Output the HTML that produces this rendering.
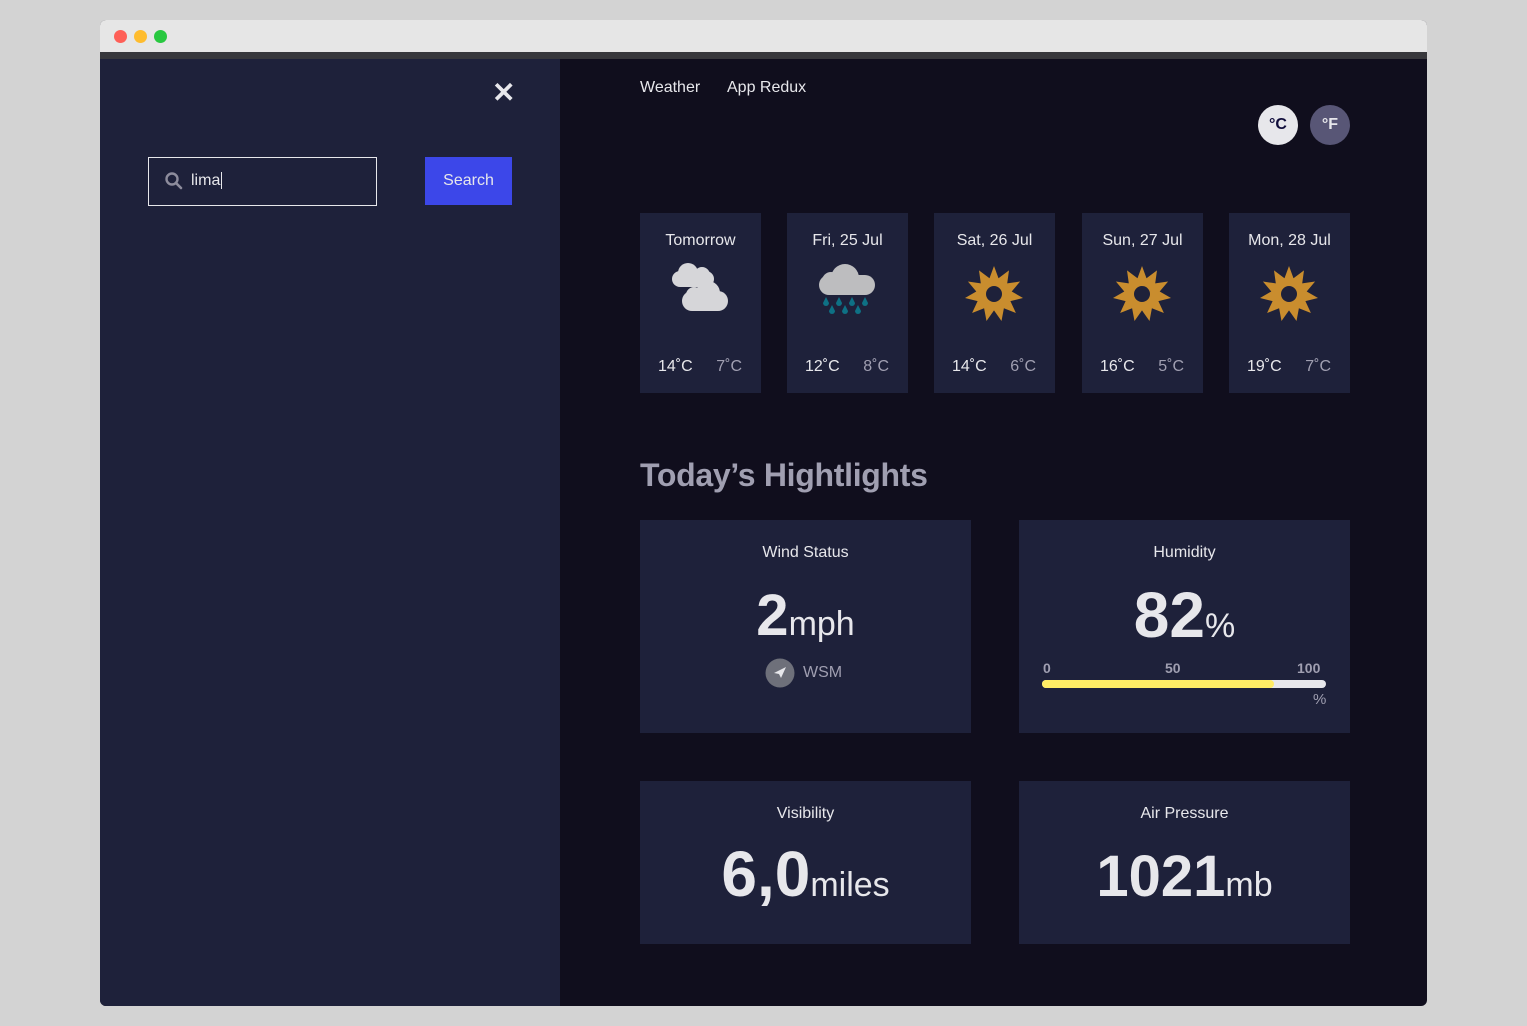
<!DOCTYPE html>
<html><head><meta charset="utf-8"><style>
*{margin:0;padding:0;box-sizing:border-box}
body{width:1527px;height:1026px;background:#d3d3d3;font-family:"Liberation Sans",sans-serif;position:relative;overflow:hidden}
.a{position:absolute}
.win{left:100px;top:20px;width:1327px;height:986px;border-radius:6px;overflow:hidden;background:#100e1d}
.bar{left:0;top:0;width:1327px;height:32px;background:#e6e6e6}
.strip{left:0;top:32px;width:1327px;height:7px;background:#38383c}
.dot{width:13px;height:13px;border-radius:50%;top:10px}
.side{left:0;top:39px;width:460px;height:947px;background:#1e213a}
.t{color:#e7e7eb}
.card{background:#1e213a;width:121px;height:180px;top:213px}
.card .d{position:absolute;top:19px;width:100%;text-align:center;color:#e7e7eb;font-size:16px}
.card .hi{position:absolute;left:18px;top:145px;color:#e7e7eb;font-size:16px}
.card .lo{position:absolute;right:19px;top:145px;color:#a09fb1;font-size:16px}
.card svg{position:absolute;left:28px;top:50px}
.hl{background:#1e213a;width:331px}
.hl .ti{position:absolute;top:24px;width:100%;text-align:center;color:#e7e7eb;font-size:16px}
.big{position:absolute;width:100%;text-align:center;color:#e7e7eb;font-weight:bold}
.big span{font-weight:normal;font-size:34px}
</style></head><body>
<div class="a win">
 <div class="a bar"></div>
 <div class="a dot" style="left:14px;background:#fe5f57"></div>
 <div class="a dot" style="left:34px;background:#febc2e"></div>
 <div class="a dot" style="left:54px;background:#28c840"></div>
 <div class="a strip"></div>
 <div class="a side"></div>
 <div class="a t" style="left:392px;top:56px;font-size:28px;font-weight:bold">✕</div>
 <div class="a" style="left:48px;top:137px;width:229px;height:49px;border:1px solid #e7e7eb"></div>
 <svg class="a" style="left:64px;top:151px" width="20" height="20" viewBox="0 0 20 20"><circle cx="8" cy="8" r="5.5" stroke="#8d8c9c" stroke-width="2.4" fill="none"/><path d="M12 12l5 5" stroke="#8d8c9c" stroke-width="2.6" stroke-linecap="round"/></svg>
 <div class="a t" style="left:91px;top:152px;font-size:16px">lima<span style="border-left:1px solid #e7e7eb;margin-left:1px"></span></div>
 <div class="a" style="left:325px;top:137px;width:87px;height:48px;background:#3c47e9;color:#e7e7eb;font-size:16px;text-align:center;line-height:48px">Search</div>

 <div class="a t" style="left:540px;top:59px;font-size:16px">Weather</div>
 <div class="a t" style="left:627px;top:59px;font-size:16px">App Redux</div>
 <div class="a" style="left:1158px;top:85px;width:40px;height:40px;border-radius:50%;background:#e7e7eb;color:#110e3c;font-weight:bold;font-size:16px;text-align:center;line-height:40px">°C</div>
 <div class="a" style="left:1210px;top:85px;width:40px;height:40px;border-radius:50%;background:#585676;color:#e7e7eb;font-weight:bold;font-size:16px;text-align:center;line-height:40px">°F</div>
</div>

<div class="a card" style="left:640px"><div class="d">Tomorrow</div>
<svg width="64" height="60" viewBox="0 0 64 60"><g fill="#d6d6d9"><rect x="4" y="8" width="42" height="16" rx="8"/><circle cx="20" cy="10" r="10"/><circle cx="34" cy="12" r="8"/></g><g fill="#1e213a"><circle cx="40" cy="34" r="14"/></g><g fill="#d6d6d9"><rect x="14" y="28" width="46" height="20" rx="10"/><circle cx="40" cy="30" r="12"/><circle cx="26" cy="32" r="8"/></g></svg>
<div class="hi">14˚C</div><div class="lo">7˚C</div></div>

<div class="a card" style="left:787px"><div class="d">Fri, 25 Jul</div>
<svg width="64" height="64" viewBox="0 0 64 64"><g fill="#bdbdbf"><rect x="4" y="12" width="56" height="20" rx="10"/><circle cx="30" cy="15" r="14"/><circle cx="16" cy="18" r="9"/></g><g fill="#0e7185"><path d="M11 34l3 6a3 3 0 1 1-6 0z"/><path d="M24 34l3 6a3 3 0 1 1-6 0z"/><path d="M37 34l3 6a3 3 0 1 1-6 0z"/><path d="M50 34l3 6a3 3 0 1 1-6 0z"/><path d="M17 42l3 6a3 3 0 1 1-6 0z"/><path d="M30 42l3 6a3 3 0 1 1-6 0z"/><path d="M43 42l3 6a3 3 0 1 1-6 0z"/></g></svg>
<div class="hi">12˚C</div><div class="lo">8˚C</div></div>

<div class="a card" style="left:934px"><div class="d">Sat, 26 Jul</div>
<svg width="64" height="64" viewBox="0 0 64 64"><polygon fill="#c98d2e" points="32,3 36.5,15.2 47,7.4 45.2,20.4 58.1,18.5 49.7,28.5 61,35 48.4,38.1 53.9,50 41.9,45.2 39.5,58 32,47.4 24.5,58 22.1,45.2 10.1,50 15.6,38.1 3,35 14.3,28.5 5.9,18.5 18.8,20.4 17,7.4 27.5,15.2"/><circle cx="32" cy="31" r="8" fill="#1e213a"/></svg>
<div class="hi">14˚C</div><div class="lo">6˚C</div></div>

<div class="a card" style="left:1082px"><div class="d">Sun, 27 Jul</div>
<svg width="64" height="64" viewBox="0 0 64 64"><polygon fill="#c98d2e" points="32,3 36.5,15.2 47,7.4 45.2,20.4 58.1,18.5 49.7,28.5 61,35 48.4,38.1 53.9,50 41.9,45.2 39.5,58 32,47.4 24.5,58 22.1,45.2 10.1,50 15.6,38.1 3,35 14.3,28.5 5.9,18.5 18.8,20.4 17,7.4 27.5,15.2"/><circle cx="32" cy="31" r="8" fill="#1e213a"/></svg>
<div class="hi">16˚C</div><div class="lo">5˚C</div></div>

<div class="a card" style="left:1229px"><div class="d">Mon, 28 Jul</div>
<svg width="64" height="64" viewBox="0 0 64 64"><polygon fill="#c98d2e" points="32,3 36.5,15.2 47,7.4 45.2,20.4 58.1,18.5 49.7,28.5 61,35 48.4,38.1 53.9,50 41.9,45.2 39.5,58 32,47.4 24.5,58 22.1,45.2 10.1,50 15.6,38.1 3,35 14.3,28.5 5.9,18.5 18.8,20.4 17,7.4 27.5,15.2"/><circle cx="32" cy="31" r="8" fill="#1e213a"/></svg>
<div class="hi">19˚C</div><div class="lo">7˚C</div></div>

<div class="a" style="left:640px;top:457px;font-size:32px;font-weight:bold;color:#a09fb1;letter-spacing:-0.3px">Today’s Hightlights</div>

<div class="a hl" style="left:640px;top:520px;height:213px"><div class="ti">Wind Status</div>
<div class="big" style="top:62px;font-size:58px">2<span>mph</span></div>
<svg class="a" style="left:125px;top:138px" width="30" height="30" viewBox="0 0 30 30"><circle cx="15" cy="15" r="14.5" fill="#6e707a"/><path d="M21 9l-5 11-2-4-5-1z" fill="#e7e7eb"/></svg>
<div class="a" style="left:163px;top:144px;color:#a09fb1;font-size:16px">WSM</div></div>

<div class="a hl" style="left:1019px;top:520px;height:213px"><div class="ti">Humidity</div>
<div class="big" style="top:58px;font-size:64px">82<span style="font-size:34px">%</span></div>
<div class="a" style="left:24px;top:140px;color:#a09fb1;font-size:14px;font-weight:bold">0</div>
<div class="a" style="left:146px;top:140px;color:#a09fb1;font-size:14px;font-weight:bold">50</div>
<div class="a" style="left:278px;top:140px;color:#a09fb1;font-size:14px;font-weight:bold">100</div>
<div class="a" style="left:23px;top:160px;width:284px;height:8px;border-radius:4px;background:#e7e7eb"><div style="width:232px;height:8px;border-radius:4px;background:#ffec65"></div></div>
<div class="a" style="left:294px;top:171px;color:#a09fb1;font-size:15px">%</div></div>

<div class="a hl" style="left:640px;top:781px;height:163px"><div class="ti">Visibility</div>
<div class="big" style="top:56px;font-size:64px">6,0<span>miles</span></div></div>

<div class="a hl" style="left:1019px;top:781px;height:163px"><div class="ti">Air Pressure</div>
<div class="big" style="top:62px;font-size:58px">1021<span>mb</span></div></div>
</body></html>
